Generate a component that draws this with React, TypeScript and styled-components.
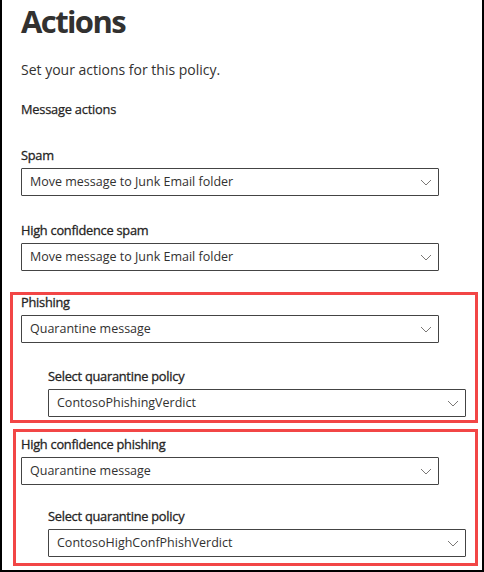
import React from "react";
import styled, { createGlobalStyle } from "styled-components";

const Global = createGlobalStyle`
  html, body { margin: 0; padding: 0; background: #fff; }
  body { font-family: "Open Sans", "Noto Sans", Arial, sans-serif; color: #323130; }
  * { box-sizing: border-box; }
`;

const Frame = styled.div`
  width: 484px;
  height: 572px;
  border: 2px solid #000;
  border-top: none;
  padding-left: 19px;
  display: flex;
  flex-direction: column;
  background: #fff;
  overflow: hidden;
`;

const Title = styled.h1`
  margin: 0;
  font-size: 31px;
  line-height: 42px;
  font-weight: 700;
  letter-spacing: -1.6px;
  color: #323130;
`;

const Description = styled.p`
  margin: 18px 0 0;
  font-size: 14px;
  line-height: 20px;
  color: #323130;
`;

const SectionHeading = styled.div`
  margin-top: 19px;
  font-size: 12.8px;
  line-height: 20px;
  font-weight: 400;
  letter-spacing: -0.2px;
  color: #252423;
  -webkit-text-stroke: 0.25px #252423;
`;

const Field = styled.div<{ $top: number; $indent?: number }>`
  margin-top: ${(p) => p.$top}px;
  margin-left: ${(p) => p.$indent ?? 0}px;
  display: flex;
  flex-direction: column;
  gap: 3px;
`;

const Label = styled.label`
  font-size: 12.8px;
  line-height: 20px;
  font-weight: 400;
  letter-spacing: -0.25px;
  color: #252423;
  -webkit-text-stroke: 0.3px #252423;
`;

const Dropdown = styled.div`
  width: 418px;
  height: 28px;
  border: 1px solid #444;
  border-radius: 1px;
  display: flex;
  align-items: center;
  justify-content: space-between;
  padding: 0 6px 0 8px;
  font-size: 12.5px;
  line-height: 26px;
  color: #323130;
`;

const Chevron = styled.svg`
  width: 12px;
  height: 12px;
  flex: none;
`;

const Highlight = styled.div<{ $top: number; $box: [number, number, number, number] }>`
  position: relative;
  margin-top: ${(p) => p.$top}px;
  &::after {
    content: "";
    position: absolute;
    top: ${(p) => p.$box[0]}px;
    right: ${(p) => p.$box[1]}px;
    bottom: ${(p) => p.$box[2]}px;
    left: ${(p) => p.$box[3]}px;
    border: 3px solid #f24646;
    pointer-events: none;
  }
`;

function Select({ value }: { value: string }) {
  return (
    <Dropdown>
      <span>{value}</span>
      <Chevron viewBox="0 0 12 12">
        <path d="M1 4 L6 9 L11 4" fill="none" stroke="#7a7876" strokeWidth="1" />
      </Chevron>
    </Dropdown>
  );
}

export default function App() {
  return (
    <>
      <Global />
      <Frame>
        <Title>Actions</Title>
        <Description>Set your actions for this policy.</Description>
        <SectionHeading>Message actions</SectionHeading>
        <Field $top={26}>
          <Label>Spam</Label>
          <Select value="Move message to Junk Email folder" />
        </Field>
        <Field $top={24}>
          <Label>High confidence spam</Label>
          <Select value="Move message to Junk Email folder" />
        </Field>
        <Highlight $top={21} $box={[0, 4, -6, -11]}>
          <Field $top={0}>
            <Label>Phishing</Label>
            <Select value="Quarantine message" />
          </Field>
          <Field $top={23} $indent={27}>
            <Label>Select quarantine policy</Label>
            <Select value="ContosoPhishingVerdict" />
          </Field>
        </Highlight>
        <Highlight $top={17} $box={[-5, 4, -9, -8]}>
          <Field $top={0}>
            <Label>High confidence phishing</Label>
            <Select value="Quarantine message" />
          </Field>
          <Field $top={21} $indent={27}>
            <Label>Select quarantine policy</Label>
            <Select value="ContosoHighConfPhishVerdict" />
          </Field>
        </Highlight>
      </Frame>
    </>
  );
}
